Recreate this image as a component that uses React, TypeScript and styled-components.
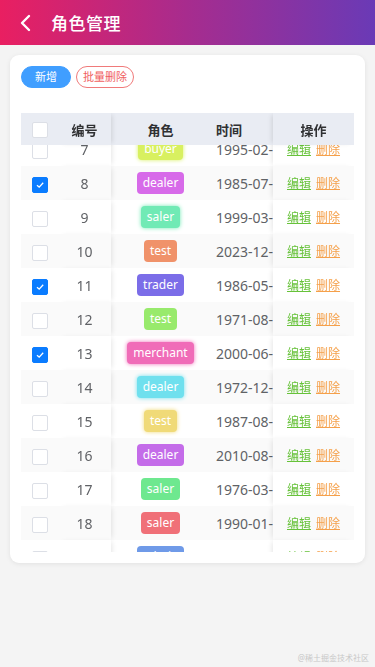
import React, { useLayoutEffect, useRef } from "react";
import styled, { createGlobalStyle } from "styled-components";

const GlobalStyle = createGlobalStyle`
  html, body {
    margin: 0;
    padding: 0;
    background: #f4f4f4;
    font-family: "Noto Sans", "Noto Sans CJK SC", sans-serif;
  }
  * { box-sizing: border-box; }
`;

type Row = {
  id: number;
  role: string;
  color: string;
  date: string;
  checked?: boolean;
  glow?: boolean;
};

const rows: Row[] = [
  { id: 1, role: "admin", color: "#6f9ae8", date: "1980-04-12" },
  { id: 2, role: "saler", color: "#6ee8a0", date: "1993-11-02" },
  { id: 3, role: "test", color: "#f0926a", date: "2005-06-21" },
  { id: 4, role: "trader", color: "#7b6de8", date: "1977-01-30" },
  { id: 5, role: "dealer", color: "#d769e8", date: "2012-09-08" },
  { id: 6, role: "buyer", color: "#f0d97a", date: "1968-03-17" },
  { id: 7, role: "buyer", color: "#d8f060", date: "1995-02-11", glow: true },
  { id: 8, role: "dealer", color: "#d76ae9", date: "1985-07-23", checked: true },
  { id: 9, role: "saler", color: "#70eab5", date: "1999-03-05", glow: true },
  { id: 10, role: "test", color: "#f0926a", date: "2023-12-19" },
  { id: 11, role: "trader", color: "#7b6de8", date: "1986-05-27", checked: true },
  { id: 12, role: "test", color: "#98ea6c", date: "1971-08-14" },
  { id: 13, role: "merchant", color: "#f06cb8", date: "2000-06-09", checked: true, glow: true },
  { id: 14, role: "dealer", color: "#6fe0ee", date: "1972-12-01", glow: true },
  { id: 15, role: "test", color: "#f0da78", date: "1987-08-25", glow: true },
  { id: 16, role: "dealer", color: "#c46ce9", date: "2010-08-03" },
  { id: 17, role: "saler", color: "#6ee88f", date: "1976-03-16" },
  { id: 18, role: "saler", color: "#f07078", date: "1990-01-28" },
  { id: 19, role: "admin", color: "#6f9ae8", date: "1983-10-07" },
  { id: 20, role: "buyer", color: "#d8f060", date: "1998-05-13" },
];

const Page = styled.div`
  height: 667px;
  position: relative;
  overflow: hidden;
`;

const NavBar = styled.header`
  height: 45px;
  display: flex;
  align-items: center;
  padding-left: 17px;
  gap: 16px;
  background: linear-gradient(90deg, #e91f61 0%, #a72c8e 50%, #6a3ab6 100%);
  color: #fff;
`;

const Title = styled.h1`
  margin: 0;
  font-size: 17px;
  font-weight: 500;
  letter-spacing: 0.5px;
`;

const Card = styled.section`
  margin: 10px 10px 0;
  padding: 11px;
  background: #fff;
  border-radius: 9px;
  box-shadow: 0 1px 5px rgba(0, 0, 0, 0.08);
`;

const Toolbar = styled.div`
  display: flex;
  gap: 5px;
  margin-bottom: 25px;
`;

const Pill = styled.button<{ $danger?: boolean }>`
  height: 22px;
  margin: 0;
  border-radius: 11px;
  font-family: inherit;
  font-size: 11px;
  line-height: 20px;
  border: 1px solid ${(p) => (p.$danger ? "#f07a7a" : "#409eff")};
  background: ${(p) => (p.$danger ? "#fff" : "#409eff")};
  color: ${(p) => (p.$danger ? "#f06060" : "#fff")};
  width: ${(p) => (p.$danger ? "58px" : "50px")};
  padding: 0;
`;

const Scroller = styled.div`
  height: 439px;
  overflow: auto;
  scrollbar-width: none;
  &::-webkit-scrollbar { display: none; }
`;

const Table = styled.table`
  border-collapse: separate;
  border-spacing: 0;
  width: 420px;
  table-layout: fixed;
  color: #606266;
  font-size: 14px;
`;

const Th = styled.th<{ $w: number; $left?: number; $right?: boolean; $align?: string; $edge?: "l" | "r" }>`
  position: sticky;
  top: 0;
  z-index: ${(p) => (p.$left !== undefined || p.$right ? 3 : 2)};
  ${(p) => (p.$left !== undefined ? `left: ${p.$left}px;` : "")}
  ${(p) => (p.$right ? "right: 0;" : "")}
  width: ${(p) => p.$w}px;
  height: 32px;
  padding: 0 6px;
  background: #e9ecf3;
  color: #303133;
  font-size: 13px;
  font-weight: 700;
  text-align: ${(p) => p.$align || "center"};
  white-space: nowrap;
  box-shadow: ${(p) =>
    p.$edge === "l"
      ? "3px 0 5px -2px rgba(0,0,0,0.12)"
      : p.$edge === "r"
      ? "-3px 0 5px -2px rgba(0,0,0,0.12)"
      : "none"};
`;

const Tr = styled.tr<{ $stripe: boolean }>`
  & > td {
    background: ${(p) => (p.$stripe ? "#fafafa" : "#fff")};
  }
`;

const Td = styled.td<{ $left?: number; $right?: boolean; $align?: string; $edge?: "l" | "r" }>`
  height: 34px;
  padding: 0 6px;
  text-align: ${(p) => p.$align || "center"};
  white-space: nowrap;
  overflow: hidden;
  ${(p) => (p.$left !== undefined ? `position: sticky; left: ${p.$left}px; z-index: 1;` : "")}
  ${(p) => (p.$right ? "position: sticky; right: 0; z-index: 1;" : "")}
  box-shadow: ${(p) =>
    p.$edge === "l"
      ? "3px 0 5px -2px rgba(0,0,0,0.1)"
      : p.$edge === "r"
      ? "-3px 0 5px -2px rgba(0,0,0,0.1)"
      : "none"};
`;

const Box = styled.span<{ $checked?: boolean }>`
  display: inline-flex;
  align-items: center;
  justify-content: center;
  width: 16px;
  height: 16px;
  border-radius: 2px;
  vertical-align: middle;
  border: 1px solid ${(p) => (p.$checked ? "#0a7cff" : "#dcdfe6")};
  background: ${(p) => (p.$checked ? "#0a7cff" : "#fff")};
`;

const Tag = styled.span<{ $bg: string; $glow?: boolean }>`
  display: inline-block;
  height: 22px;
  line-height: 22px;
  padding: 0 6px;
  border-radius: 4px;
  font-size: 12px;
  color: #fff;
  background: ${(p) => p.$bg};
  box-shadow: ${(p) => (p.$glow ? `0 0 4px ${p.$bg}` : "none")};
`;

const Ops = styled.div`
  display: flex;
  justify-content: center;
  gap: 5px;
`;

const OpLink = styled.a<{ $color: string }>`
  font-size: 12px;
  color: ${(p) => p.$color};
  text-decoration: underline;
  cursor: pointer;
`;

const Watermark = styled.div`
  position: absolute;
  right: 6px;
  bottom: 4px;
  font-size: 8px;
  color: #c8c8c8;
`;

const Check = () => (
  <svg width="10" height="10" viewBox="0 0 10 10">
    <path d="M2 5.2 L4.2 7.2 L8.2 2.8" fill="none" stroke="#fff" strokeWidth="1.3" />
  </svg>
);

const Back = () => (
  <svg width="18" height="18" viewBox="0 0 18 18">
    <path d="M12 2 L5 9 L12 16" fill="none" stroke="#fff" strokeWidth="2.4" strokeLinecap="round" strokeLinejoin="round" />
  </svg>
);

export default function App() {
  const ref = useRef<HTMLDivElement>(null);

  useLayoutEffect(() => {
    if (ref.current) ref.current.scrollTop = 217;
  }, []);

  return (
    <Page>
      <GlobalStyle />
      <NavBar>
        <Back />
        <Title>角色管理</Title>
      </NavBar>
      <Card>
        <Toolbar>
          <Pill>新增</Pill>
          <Pill $danger>批量删除</Pill>
        </Toolbar>
        <Scroller ref={ref}>
          <Table>
            <thead>
              <tr>
                <Th $w={37} $left={0}>
                  <Box />
                </Th>
                <Th $w={53} $left={37} $edge="l">编号</Th>
                <Th $w={99}>角色</Th>
                <Th $w={150} $align="left">时间</Th>
                <Th $w={81} $right $edge="r">操作</Th>
              </tr>
            </thead>
            <tbody>
              {rows.map((r) => (
                <Tr key={r.id} $stripe={r.id % 2 === 0}>
                  <Td $left={0}>
                    <Box $checked={r.checked}>{r.checked && <Check />}</Box>
                  </Td>
                  <Td $left={37} $edge="l">{r.id}</Td>
                  <Td>
                    <Tag $bg={r.color} $glow={r.glow}>{r.role}</Tag>
                  </Td>
                  <Td $align="left">{r.date}</Td>
                  <Td $right $edge="r">
                    <Ops>
                      <OpLink $color="#67c23a">编辑</OpLink>
                      <OpLink $color="#f5a04a">删除</OpLink>
                    </Ops>
                  </Td>
                </Tr>
              ))}
            </tbody>
          </Table>
        </Scroller>
      </Card>
      <Watermark>@稀土掘金技术社区</Watermark>
    </Page>
  );
}
